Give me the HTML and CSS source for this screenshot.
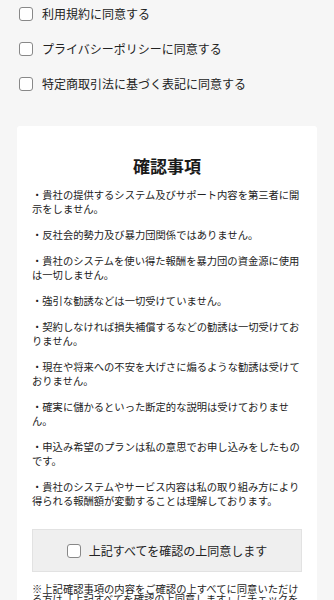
FILE: index.html
```
<!DOCTYPE html>
<html lang="ja">
<head>
    <meta charset="UTF-8">
    <meta name="viewport" content="width=device-width, initial-scale=1.0">
    <title>同意確認</title>
    <link rel="stylesheet" href="styles.css">
</head>
<body>
    <!-- 規約への同意 -->
    <div class="agree-list">
        <label class="agree-row"><input type="checkbox" class="check"> 利用規約に同意する</label>
        <label class="agree-row"><input type="checkbox" class="check"> プライバシーポリシーに同意する</label>
        <label class="agree-row"><input type="checkbox" class="check"> 特定商取引法に基づく表記に同意する</label>
    </div>

    <!-- 確認事項 -->
    <div class="confirm-card">
        <h2 class="confirm-title">確認事項</h2>
        <p class="confirm-item">・貴社の提供するシステム及びサポート内容を第三者に開示をしません。</p>
        <p class="confirm-item">・反社会的勢力及び暴力団関係ではありません。</p>
        <p class="confirm-item">・貴社のシステムを使い得た報酬を暴力団の資金源に使用は一切しません。</p>
        <p class="confirm-item">・強引な勧誘などは一切受けていません。</p>
        <p class="confirm-item">・契約しなければ損失補償するなどの勧誘は一切受けておりません。</p>
        <p class="confirm-item">・現在や将来への不安を大げさに煽るような勧誘は受けておりません。</p>
        <p class="confirm-item">・確実に儲かるといった断定的な説明は受けておりません。</p>
        <p class="confirm-item">・申込み希望のプランは私の意思でお申し込みをしたものです。</p>
        <p class="confirm-item">・貴社のシステムやサービス内容は私の取り組み方により得られる報酬額が変動することは理解しております。</p>

        <label class="agree-all"><input type="checkbox" class="check"> 上記すべてを確認の上同意します</label>

        <p class="note">※上記確認事項の内容をご確認の上すべてに同意いただける方は「上記すべてを確認の上同意します」にチェックを入れてお進みください。</p>
    </div>
</body>
</html>
```

FILE: styles.css
```
/* ベース */
body {
    margin: 0;
    background-color: #f6f6f6;
    font-family: "Noto Sans CJK JP", "Noto Sans", sans-serif;
    color: #222;
}

/* チェックボックス */
.check {
    appearance: none;
    -webkit-appearance: none;
    width: 14px;
    height: 14px;
    margin: 0;
    border: 1px solid #888;
    border-radius: 3px;
    background-color: #fff;
    flex-shrink: 0;
}

/* 規約の同意 */
.agree-list {
    padding: 7px 19px 0;
}

.agree-row {
    display: flex;
    align-items: center;
    gap: 9px;
    height: 14px;
    margin-bottom: 21px;
    font-size: 12px;
    line-height: 14px;
}

/* 確認事項カード */
.confirm-card {
    margin: 35px 17px 0;
    padding: 28px 15px 20px;
    background-color: #fff;
    border-radius: 3px;
}

.confirm-title {
    margin: 0 0 10px;
    font-size: 17px;
    line-height: 24px;
    text-align: center;
    font-weight: bold;
    color: #1a1a1a;
}

.confirm-item {
    margin: 0 0 12px;
    font-size: 10.3px;
    line-height: 14px;
}

/* すべて同意 */
.agree-all {
    display: flex;
    align-items: center;
    justify-content: center;
    gap: 8px;
    height: 41px;
    margin-top: 21px;
    background-color: #efefef;
    border: 1px solid #e2e2e2;
    font-size: 12px;
}

.note {
    margin: 12px 0 0;
    font-size: 10.3px;
    line-height: 10px;
}
```
